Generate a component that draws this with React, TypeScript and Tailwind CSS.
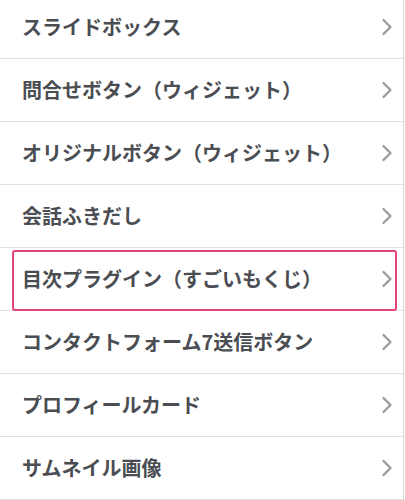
import React from 'react';

const items = [
  'スライドボックス',
  '問合せボタン（ウィジェット）',
  'オリジナルボタン（ウィジェット）',
  '会話ふきだし',
  '目次プラグイン（すごいもくじ）',
  'コンタクトフォーム7送信ボタン',
  'プロフィールカード',
  'サムネイル画像',
];

const Chevron: React.FC = () => (
  <svg width="12" height="18" viewBox="0 0 12 18" fill="none">
    <path d="M2.5 2 L9.5 9 L2.5 16" stroke="#9b9b9b" strokeWidth="2.3" strokeLinecap="round" strokeLinejoin="round" />
  </svg>
);

export default function App() {
  return (
    <div className="h-[500px] w-[405px] overflow-hidden bg-white">
      <ul
        className="-mt-[4px] w-[404px] border-r border-[#d9d9d9]"
        style={{ fontFamily: '"Noto Sans CJK JP", "Noto Sans", sans-serif' }}
      >
        {items.map((label, i) => (
          <li
            key={label}
            className="relative flex h-[63px] items-center justify-between border-b border-[#e2e2e2] pl-[22px] pr-[10px]"
          >
            <span className="text-[20px] font-bold text-[#4a4d52]">{label}</span>
            <Chevron />
            {i === 4 && (
              <span className="pointer-events-none absolute left-[12px] right-[6px] top-[2px] bottom-[-1px] rounded-[3px] border-2 border-[#e4437a]" />
            )}
          </li>
        ))}
      </ul>
    </div>
  );
}
